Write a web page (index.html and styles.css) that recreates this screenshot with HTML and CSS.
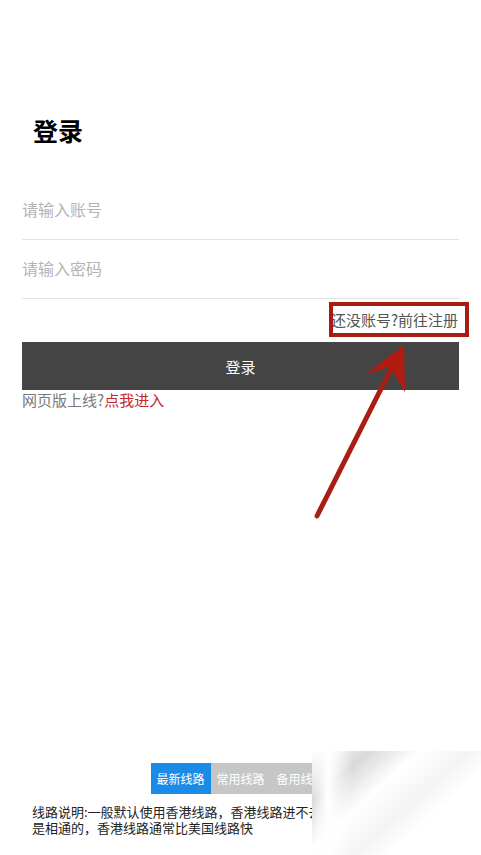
FILE: index.html
```html
<!DOCTYPE html>
<html lang="zh-CN">
<head>
    <meta charset="UTF-8">
    <meta name="viewport" content="width=device-width, initial-scale=1.0">
    <title>登录</title>
    <link rel="stylesheet" href="styles.css">
</head>
<body>
    <div class="page">
        <div class="login">
            <h1 class="title">登录</h1>
            <input class="field" type="text" placeholder="请输入账号">
            <input class="field" type="password" placeholder="请输入密码">
            <div class="register-row">
                <a class="register" href="#">还没账号?前往注册<span class="mark"></span></a>
            </div>
            <button class="submit">登录</button>
            <p class="web">网页版上线?<a href="#">点我进入</a></p>
        </div>

        <div class="footer">
            <div class="tabs">
                <span class="tab active">最新线路</span>
                <span class="tab">常用线路</span>
                <span class="tab">备用线路</span>
            </div>
            <p class="note">线路说明:一般默认使用香港线路，香港线路进不去</p>
            <p class="note">是相通的，香港线路通常比美国线路快</p>
            <div class="curl"></div>
        </div>

        <svg class="arrow" width="481" height="855" viewBox="0 0 481 855">
            <line x1="317" y1="516" x2="392" y2="367" stroke="#a81d15" stroke-width="5" stroke-linecap="round"/>
            <polygon points="404,345 366,374 390,367 405,392" fill="#b01c12"/>
        </svg>
    </div>
</body>
</html>
```

FILE: styles.css
```css
* {
    box-sizing: border-box;
}

body {
    margin: 0;
    background-color: #fff;
    font-family: "Noto Sans CJK SC", "Noto Sans", sans-serif;
}

.page {
    position: relative;
    height: 855px;
    overflow: hidden;
    display: flex;
    flex-direction: column;
}

.login {
    padding: 112px 22px 0;
}

.title {
    margin: 0 0 33px 11px;
    font-size: 25px;
    line-height: 36px;
    font-weight: bold;
    color: #000;
}

.field {
    display: block;
    width: 100%;
    height: 59px;
    margin: 0;
    padding: 0 0 2px;
    border: none;
    border-bottom: 1px solid #e2e2e2;
    font-family: inherit;
    font-size: 16px;
    color: #333;
    outline: none;
}

.field::placeholder {
    color: #b4b4b4;
}

.register-row {
    display: flex;
    justify-content: flex-end;
    align-items: center;
    height: 43px;
    padding-bottom: 2px;
}

.register {
    position: relative;
    font-size: 15px;
    color: #555;
    text-decoration: none;
    margin-right: 1px;
}

.mark {
    position: absolute;
    left: -2px;
    right: -11px;
    top: -7px;
    bottom: -7px;
    border: 4px solid #a71d16;
}

.submit {
    display: block;
    width: 100%;
    height: 48px;
    border: none;
    background-color: #444;
    color: #fff;
    font-family: inherit;
    font-size: 15px;
}

.web {
    margin: 1px 0 0;
    font-size: 15px;
    line-height: 18px;
    color: #7a7a7a;
}

.web a {
    color: #c4262a;
    text-decoration: none;
}

.footer {
    position: relative;
    margin-top: auto;
    padding-bottom: 19px;
}

.tabs {
    display: flex;
    justify-content: center;
    margin-bottom: 10px;
}

.tab {
    width: 60px;
    height: 31px;
    line-height: 31px;
    text-align: center;
    font-size: 12px;
    color: #fff;
    background-color: #c6c6c6;
}

.tab.active {
    background-color: #1a8ce8;
}

.note {
    margin: 0 0 0 32px;
    font-size: 13px;
    line-height: 16px;
    height: 16px;
    color: #222;
}

.curl {
    position: absolute;
    left: 312px;
    top: -12px;
    right: 0;
    bottom: 0;
    background:
        linear-gradient(to right, rgba(255, 255, 255, 0) 0, #fff 16px, rgba(255, 255, 255, 0) 40px),
        linear-gradient(138deg, #fff 0%, #d9d9d9 20%, #fff 38%, #f4f4f4 55%, #fff 68%);
}

.arrow {
    position: absolute;
    left: 0;
    top: 0;
    pointer-events: none;
}
```
